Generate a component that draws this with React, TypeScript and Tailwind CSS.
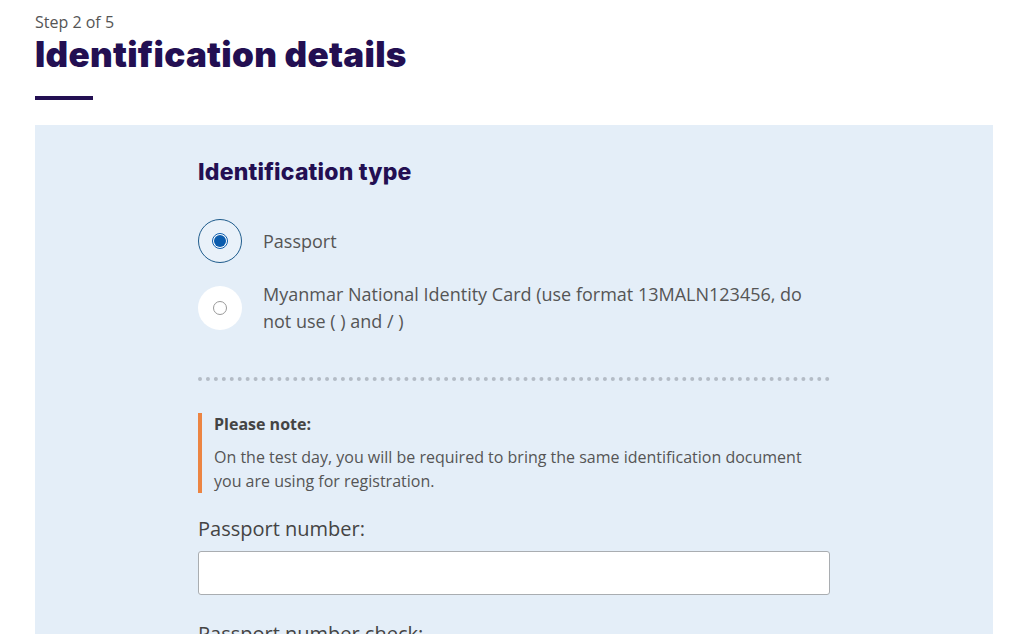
export default function App() {
  return (
    <div className="min-h-screen bg-white font-['Open_Sans',sans-serif] text-[#4a4a4a]">
      <div className="px-[35px] pt-[12px]">
        <div className="text-[16px] leading-[20px] text-[#555]">Step 2 of 5</div>
        <h1 className="mt-0 font-['Inter',sans-serif] text-[35px] font-black leading-[44px] tracking-[0.3px] text-[#230f52]">
          Identification details
        </h1>
        <div className="mt-[20px] h-[4px] w-[58px] bg-[#230f52]" />
      </div>

      <div className="mx-[35px] mr-[42px] mt-[25px] bg-[#e4eef8] pb-[40px]">
        <div className="ml-[163px] w-[632px] pt-[32px]">
          <h2 className="font-['Inter',sans-serif] text-[23px] font-extrabold leading-[30px] tracking-[0.2px] text-[#230f52]">
            Identification type
          </h2>

          <div className="mt-[32px] flex flex-col gap-[18px]">
            <label className="flex items-center gap-[21px]">
              <span className="flex h-[44px] w-[44px] shrink-0 items-center justify-center rounded-full border border-[#1f5c8c] bg-[#e9f1f9]">
                <span className="flex h-[16px] w-[16px] items-center justify-center rounded-full border border-[#0b5cad] bg-white">
                  <span className="h-[12px] w-[12px] rounded-full bg-[#0b5cad]" />
                </span>
              </span>
              <span className="text-[18px] leading-[27px] text-[#555]">Passport</span>
            </label>
            <label className="flex items-center gap-[21px]">
              <span className="flex h-[44px] w-[44px] shrink-0 items-center justify-center rounded-full bg-white">
                <span className="h-[14px] w-[14px] rounded-full border border-[#999] bg-white" />
              </span>
              <span className="text-[18px] leading-[27px] text-[#555]">
                Myanmar National Identity Card (use format 13MALN123456, do
                <br />
                not use ( ) and / )
              </span>
            </label>
          </div>

          <div className="mt-[42px] h-[4px] w-full border-t-[4px] border-dotted border-[#b4bcc6]" />

          <div className="mt-[32px] border-l-[4px] border-[#ec8442] pl-[12px]">
            <div className="text-[16px] font-bold leading-[22px] text-[#444]">Please note:</div>
            <p className="mt-[10px] text-[16px] leading-[24px] text-[#555]">
              On the test day, you will be required to bring the same identification document
              <br />
              you are using for registration.
            </p>
          </div>

          <div className="mt-[22px] text-[20px] leading-[28px] text-[#444]">Passport number:</div>
          <input
            type="text"
            className="mt-[8px] block h-[44px] w-full rounded-[3px] border border-[#a9adb1] bg-white px-3 outline-none"
          />

          <div className="mt-[25px] text-[20px] leading-[28px] text-[#444]">Passport number check:</div>
        </div>
      </div>
    </div>
  )
}
